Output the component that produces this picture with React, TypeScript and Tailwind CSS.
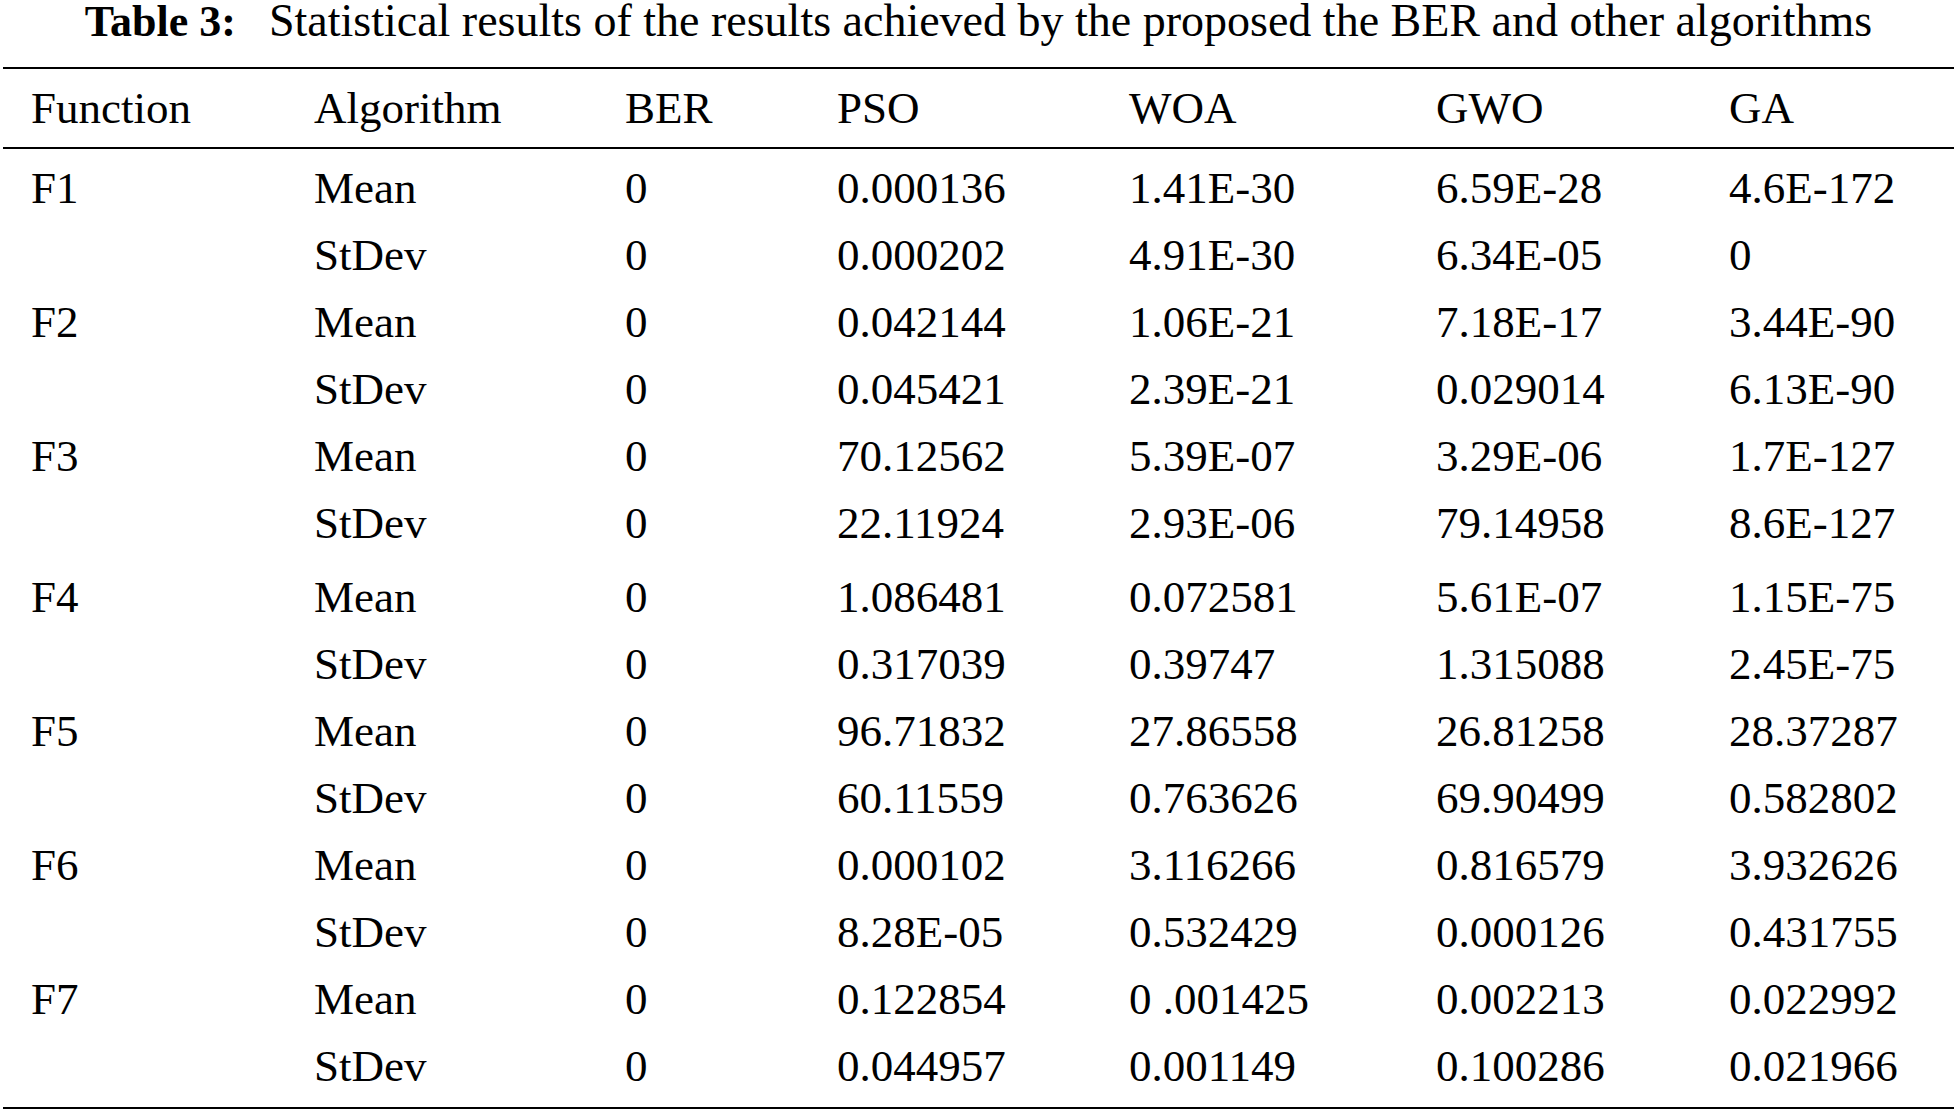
const headers = ['Function', 'Algorithm', 'BER', 'PSO', 'WOA', 'GWO', 'GA']

const groups = [
  {
    name: 'F1',
    rows: [
      ['Mean', '0', '0.000136', '1.41E-30', '6.59E-28', '4.6E-172'],
      ['StDev', '0', '0.000202', '4.91E-30', '6.34E-05', '0']
    ]
  },
  {
    name: 'F2',
    rows: [
      ['Mean', '0', '0.042144', '1.06E-21', '7.18E-17', '3.44E-90'],
      ['StDev', '0', '0.045421', '2.39E-21', '0.029014', '6.13E-90']
    ]
  },
  {
    name: 'F3',
    rows: [
      ['Mean', '0', '70.12562', '5.39E-07', '3.29E-06', '1.7E-127'],
      ['StDev', '0', '22.11924', '2.93E-06', '79.14958', '8.6E-127']
    ]
  },
  {
    name: 'F4',
    rows: [
      ['Mean', '0', '1.086481', '0.072581', '5.61E-07', '1.15E-75'],
      ['StDev', '0', '0.317039', '0.39747', '1.315088', '2.45E-75']
    ]
  },
  {
    name: 'F5',
    rows: [
      ['Mean', '0', '96.71832', '27.86558', '26.81258', '28.37287'],
      ['StDev', '0', '60.11559', '0.763626', '69.90499', '0.582802']
    ]
  },
  {
    name: 'F6',
    rows: [
      ['Mean', '0', '0.000102', '3.116266', '0.816579', '3.932626'],
      ['StDev', '0', '8.28E-05', '0.532429', '0.000126', '0.431755']
    ]
  },
  {
    name: 'F7',
    rows: [
      ['Mean', '0', '0.122854', '0 .001425', '0.002213', '0.022992'],
      ['StDev', '0', '0.044957', '0.001149', '0.100286', '0.021966']
    ]
  }
]

const cols = 'grid grid-cols-[283px_311px_212px_292px_307px_293px_1fr] pl-[28px]'

function Row({ cells }: { cells: string[] }) {
  return (
    <div className={cols + ' h-[67px] items-center'}>
      {cells.map((c, i) => (
        <div key={i} className="whitespace-pre">
          {c}
        </div>
      ))}
    </div>
  )
}

export default function App() {
  return (
    <div
      className="w-[1957px] h-[1113px] bg-white text-black text-[45px] overflow-hidden"
      style={{ fontFamily: '"Liberation Serif", "Times New Roman", serif' }}
    >
      {/* Caption */}
      <div className="h-[67px] pt-[1px] leading-[40px] text-center whitespace-nowrap">
        <span className="font-bold text-[44px]">Table 3:</span>
        <span className="ml-[33px] text-[46px]">
          Statistical results of the results achieved by the proposed the BER and other algorithms
        </span>
      </div>

      <div className="mx-[3px] border-t-2 border-b-2 border-black leading-[45px]">
        {/* Header */}
        <div className={cols + ' h-[80px] items-center border-b-2 border-black'}>
          {headers.map((h) => (
            <div key={h}>{h}</div>
          ))}
        </div>

        {/* Body */}
        <div className="pt-[6px] pb-[7px]">
          {groups.map((g) => (
            <div key={g.name} className={g.name === 'F4' ? 'mt-[7px]' : ''}>
              {g.rows.map((r, i) => (
                <Row key={i} cells={[i === 0 ? g.name : '', ...r]} />
              ))}
            </div>
          ))}
        </div>
      </div>
    </div>
  )
}
